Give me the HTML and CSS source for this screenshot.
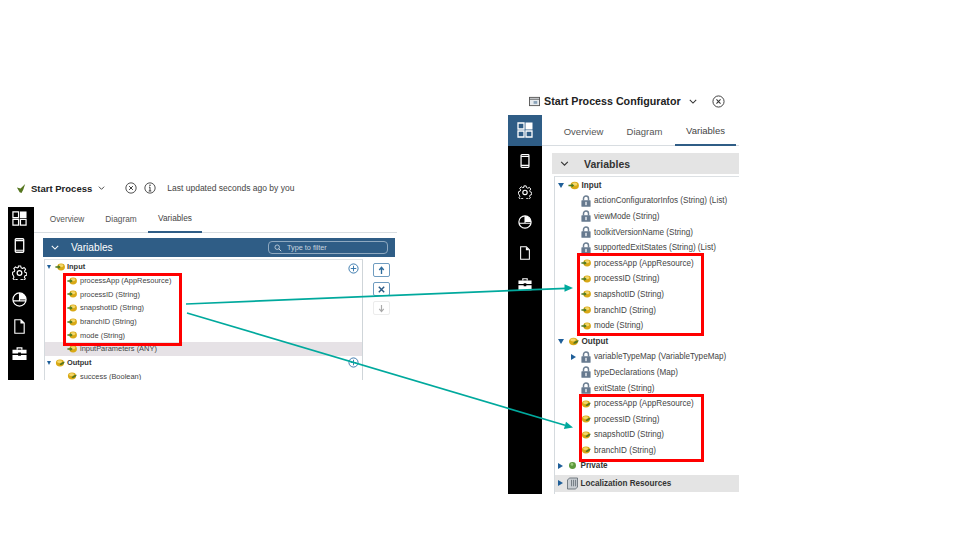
FILE: index.html
```html
<!DOCTYPE html>
<html lang="en">
<head>
  <meta charset="UTF-8">
  <title>Start Process variables</title>
  <link rel="stylesheet" href="styles.css">
</head>
<body>
  <svg class="defs" width="0" height="0">
    <defs>
      <symbol id="i-in" viewBox="0 0 12 9">
        <ellipse cx="7.300" cy="4.500" rx="4.600" ry="4.100" fill="#d9a916"/>
        <ellipse cx="7.300" cy="3" rx="2.800" ry="1.700" fill="#f3d76a"/>
        <path d="M0.500 3.700h3.500V2.200l2.800 2.300-2.800 2.300V5.300H0.500z" fill="#4c7a22"/>
      </symbol>
      <symbol id="i-out" viewBox="-2 0 12 9">
        <ellipse cx="4" cy="4.500" rx="4.900" ry="4.100" fill="#d9a916"/>
        <ellipse cx="3.500" cy="2.900" rx="3" ry="1.600" fill="#f3d76a"/>
        <path d="M3.500 6.800c1-2.200 3-3.500 6.300-3.700-1 2.800-3.300 4.300-6.300 3.700z" fill="#55761f"/>
      </symbol>
      <symbol id="i-lock" viewBox="0 0 12 14">
        <path d="M3 6.500V4a3 3 0 0 1 6 0v2.500" fill="none" stroke="#6d7f92" stroke-width="1.800"/>
        <rect x="0.500" y="6" width="11" height="8" rx="0.800" fill="#66798e"/>
        <rect x="5" y="8" width="2" height="4" fill="#d5dce4"/>
      </symbol>
      <symbol id="i-grid" viewBox="0 0 16 16">
        <path d="M1 1h6v6H1zM1 9h6v6H1zM9 9h6v6H9z" fill="none" stroke="#fff" stroke-width="1.300"/>
        <rect x="8.500" y="0.500" width="7" height="7" fill="#fff"/>
      </symbol>
      <symbol id="i-phone" viewBox="0 0 16 16">
        <rect x="3.500" y="0.800" width="9" height="14.400" rx="1" fill="none" stroke="#fff" stroke-width="1.400"/>
        <path d="M3.500 2.800h9M3.500 13h9" stroke="#fff" stroke-width="1.200"/>
      </symbol>
      <symbol id="i-gear" viewBox="0 0 16 16">
        <path d="M6.700 1h2.600l.4 2 1.500.7 1.800-1 1.600 1.900-1.200 1.700.4 1.500 1.900.7v2.400l-1.900.6-.6 1.500 1 1.700-1.800 1.700-1.700-1-1.500.6-.5 1.900H6.500l-.4-1.900-1.500-.6-1.700 1-1.800-1.800 1-1.600-.6-1.500L.6 10V7.700l1.900-.7.500-1.500-1.100-1.700 1.800-1.800 1.700 1.100 1.500-.6z" fill="none" stroke="#fff" stroke-width="1.100" stroke-linejoin="round"/>
        <circle cx="8" cy="8.500" r="2.500" fill="none" stroke="#fff" stroke-width="1.300"/>
      </symbol>
      <symbol id="i-pie" viewBox="0 0 16 16">
        <circle cx="8" cy="8" r="7" fill="none" stroke="#fff" stroke-width="1.300"/>
        <path d="M8 8V1a7 7 0 0 1 7 7z" fill="#fff"/>
        <path d="M1 9.500h14M8 1v8.500" stroke="#fff" stroke-width="1.200"/>
      </symbol>
      <symbol id="i-doc" viewBox="0 0 16 16">
        <path d="M3 .8h6.500L13 4.300v10.900H3z" fill="none" stroke="#fff" stroke-width="1.200"/>
        <path d="M9 .8v4h4z" fill="#fff"/>
      </symbol>
      <symbol id="i-box" viewBox="0 0 16 16">
        <path d="M5.500 4V2h5v2" fill="none" stroke="#fff" stroke-width="1.300"/>
        <path d="M0.500 4h15v4h-6V7h-3v1h-6zM0.500 9.500h6v1h3v-1h6V15h-15z" fill="#fff"/>
      </symbol>
      <symbol id="i-close" viewBox="0 0 14 14">
        <circle cx="7" cy="7" r="6" fill="none" stroke="#333" stroke-width="1"/>
        <path d="M4.800 4.800l4.400 4.400M9.200 4.800l-4.400 4.400" stroke="#333" stroke-width="1.100"/>
      </symbol>
      <symbol id="i-chev" viewBox="0 0 10 6">
        <path d="M1 1l4 4 4-4" fill="none" stroke="currentColor" stroke-width="1.300"/>
      </symbol>
    </defs>
  </svg>

  <!-- left panel -->
  <section class="panel panel-small">
    <header class="title">
      <svg class="title-logo" viewBox="0 0 12 12"><path d="M1 5l4 1 5-5-2 6-2 4-2-1z" fill="#55761f"/></svg>
      <b>Start Process</b>
      <svg class="chev"><use href="#i-chev"/></svg>
      <svg class="close"><use href="#i-close"/></svg>
      <svg class="close" viewBox="0 0 14 14">
        <circle cx="7" cy="7" r="6" fill="none" stroke="#333"/>
        <path d="M7 6v4.500M5.500 10.500h3M5.800 6H7" stroke="#333" stroke-width="1.100"/>
        <circle cx="7" cy="3.900" r="0.900" fill="#333"/>
      </svg>
      <span class="updated">Last updated seconds ago by you</span>
    </header>
    <div class="body">
      <nav class="rail">
        <span class="rail-item"><svg><use href="#i-grid"/></svg></span>
        <span class="rail-item"><svg><use href="#i-phone"/></svg></span>
        <span class="rail-item"><svg><use href="#i-gear"/></svg></span>
        <span class="rail-item"><svg><use href="#i-pie"/></svg></span>
        <span class="rail-item"><svg><use href="#i-doc"/></svg></span>
        <span class="rail-item"><svg><use href="#i-box"/></svg></span>
      </nav>
      <div class="main">
        <div class="tabs">
          <span class="tab">Overview</span>
          <span class="tab">Diagram</span>
          <span class="tab active">Variables</span>
        </div>
        <div class="bar">
          <svg class="chev"><use href="#i-chev"/></svg>
          <span class="bar-title">Variables</span>
          <span class="filter">
            <svg viewBox="0 0 10 10"><circle cx="4" cy="4" r="2.800" fill="none" stroke="#cfd9e3"/><path d="M6 6l3 3" stroke="#cfd9e3" stroke-width="1.200"/></svg>
            Type to filter
          </span>
        </div>
        <div class="split">
          <div class="tree">
            <div class="row head"><i class="tw down"></i><svg class="ic"><use href="#i-in"/></svg>Input<svg class="plus" viewBox="0 0 12 12"><circle cx="6" cy="6" r="5" fill="none" stroke="#2f72a8"/><path d="M3 6h6M6 3v6" stroke="#2f72a8"/></svg></div>
            <div class="row"><svg class="ic"><use href="#i-in"/></svg>processApp (AppResource)</div>
            <div class="row"><svg class="ic"><use href="#i-in"/></svg>processID (String)</div>
            <div class="row"><svg class="ic"><use href="#i-in"/></svg>snapshotID (String)</div>
            <div class="row"><svg class="ic"><use href="#i-in"/></svg>branchID (String)</div>
            <div class="row"><svg class="ic"><use href="#i-in"/></svg>mode (String)</div>
            <div class="row selected"><svg class="ic"><use href="#i-in"/></svg>inputParameters (ANY)</div>
            <div class="row head"><i class="tw down"></i><svg class="ic"><use href="#i-out"/></svg>Output<svg class="plus" viewBox="0 0 12 12"><circle cx="6" cy="6" r="5" fill="none" stroke="#2f72a8"/><path d="M3 6h6M6 3v6" stroke="#2f72a8"/></svg></div>
            <div class="row"><svg class="ic"><use href="#i-out"/></svg>success (Boolean)</div>
          </div>
          <div class="tools">
            <span class="tool"><svg viewBox="0 0 10 10"><path d="M5 9V2M2.500 4.500L5 1.500l2.500 3" fill="none" stroke="#2f6c9c" stroke-width="1.500"/></svg></span>
            <span class="tool"><svg viewBox="0 0 10 10"><path d="M2 2l6 6M8 2l-6 6" stroke="#2c5a85" stroke-width="1.600"/></svg></span>
            <span class="tool off"><svg viewBox="0 0 10 10"><path d="M5 1v7M2.500 5.500L5 8.500l2.500-3" fill="none" stroke="#aaa" stroke-width="1.300"/></svg></span>
          </div>
        </div>
      </div>
    </div>
  </section>

  <!-- right panel -->
  <section class="panel panel-big">
    <header class="title">
      <svg class="title-logo" viewBox="0 0 12 12"><rect x="0.500" y="1.500" width="11" height="9" fill="#e6eaee" stroke="#555"/><path d="M0.500 3.500h11" stroke="#555"/><rect x="5" y="5.500" width="4" height="3" fill="#8aa2b8"/></svg>
      <b>Start Process Configurator</b>
      <svg class="chev"><use href="#i-chev"/></svg>
      <svg class="close"><use href="#i-close"/></svg>
    </header>
    <div class="body">
      <nav class="rail">
        <span class="rail-item current"><svg><use href="#i-grid"/></svg></span>
        <span class="rail-item"><svg><use href="#i-phone"/></svg></span>
        <span class="rail-item"><svg><use href="#i-gear"/></svg></span>
        <span class="rail-item"><svg><use href="#i-pie"/></svg></span>
        <span class="rail-item"><svg><use href="#i-doc"/></svg></span>
        <span class="rail-item"><svg><use href="#i-box"/></svg></span>
      </nav>
      <div class="main">
        <div class="tabs">
          <span class="tab">Overview</span>
          <span class="tab">Diagram</span>
          <span class="tab active">Variables</span>
        </div>
        <div class="bar">
          <svg class="chev"><use href="#i-chev"/></svg>
          <span class="bar-title">Variables</span>
        </div>
        <div class="tree">
          <div class="row head"><i class="tw down"></i><svg class="ic"><use href="#i-in"/></svg>Input</div>
          <div class="row"><svg class="ic lock"><use href="#i-lock"/></svg>actionConfiguratorInfos (String) (List)</div>
          <div class="row"><svg class="ic lock"><use href="#i-lock"/></svg>viewMode (String)</div>
          <div class="row"><svg class="ic lock"><use href="#i-lock"/></svg>toolkitVersionName (String)</div>
          <div class="row"><svg class="ic lock"><use href="#i-lock"/></svg>supportedExitStates (String) (List)</div>
          <div class="row"><svg class="ic"><use href="#i-in"/></svg>processApp (AppResource)</div>
          <div class="row"><svg class="ic"><use href="#i-in"/></svg>processID (String)</div>
          <div class="row"><svg class="ic"><use href="#i-in"/></svg>snapshotID (String)</div>
          <div class="row"><svg class="ic"><use href="#i-in"/></svg>branchID (String)</div>
          <div class="row"><svg class="ic"><use href="#i-in"/></svg>mode (String)</div>
          <div class="row head"><i class="tw down"></i><svg class="ic"><use href="#i-out"/></svg>Output</div>
          <div class="row"><i class="tw right inset"></i><svg class="ic lock"><use href="#i-lock"/></svg>variableTypeMap (VariableTypeMap)</div>
          <div class="row"><svg class="ic lock"><use href="#i-lock"/></svg>typeDeclarations (Map)</div>
          <div class="row"><svg class="ic lock"><use href="#i-lock"/></svg>exitState (String)</div>
          <div class="row"><svg class="ic"><use href="#i-out"/></svg>processApp (AppResource)</div>
          <div class="row"><svg class="ic"><use href="#i-out"/></svg>processID (String)</div>
          <div class="row"><svg class="ic"><use href="#i-out"/></svg>snapshotID (String)</div>
          <div class="row"><svg class="ic"><use href="#i-out"/></svg>branchID (String)</div>
          <div class="row head"><i class="tw right"></i><svg class="ic" viewBox="0 0 12 9"><circle cx="6" cy="4.500" r="3.800" fill="#5c9a3c"/><circle cx="5.400" cy="3.400" r="1.500" fill="#9ccb7c"/></svg>Private</div>
          <div class="row head res"><i class="tw right"></i><svg class="ic" viewBox="0 0 12 14"><path d="M3 1h8.500v10L9 13H.5V3z" fill="#c9ced3" stroke="#5c666f" stroke-width="0.900"/><path d="M5 3v7M7.200 3v7M9.400 3v7" stroke="#5c666f" stroke-width="0.900"/></svg>Localization Resources</div>
        </div>
      </div>
    </div>
  </section>

  <!-- callouts that sit over both panels -->
  <div class="callout c1"></div>
  <div class="callout c2"></div>
  <div class="callout c3"></div>
  <svg class="arrows" width="960" height="540" viewBox="0 0 960 540">
    <path d="M186 304L566 288.300" stroke="#00a99d" stroke-width="1.700"/>
    <path d="M573 288l-8.500-3.800v7.600z" fill="#00a99d"/>
    <path d="M187 313L565 425.200" stroke="#00a99d" stroke-width="1.700"/>
    <path d="M573 427.500l-7-5.800-2.100 7.200z" fill="#00a99d"/>
  </svg>
</body>
</html>
```
FILE: styles.css
```css
html, body {
  margin: 0;
  padding: 0;
}

body {
  width: 960px;
  height: 540px;
  position: relative;
  overflow: hidden;
  background: #fff;
  font-family: "Liberation Sans", Arial, sans-serif;
  color: #444;
}

.defs {
  position: absolute;
}

svg {
  flex: none;
  display: block;
}

/* panels sit on a free canvas, like pictures on a slide */
.panel {
  position: absolute;
  display: flex;
  flex-direction: column;
}

.panel-small {
  left: 8px;
  top: 180px;
  width: 389px;
  height: 200px;
  font-size: 7.450px;
}

.panel-big {
  left: 508px;
  top: 92px;
  width: 231px;
  height: 402px;
  font-size: 8.150px;
}

.title {
  display: flex;
  align-items: center;
  color: #222;
}

.title b {
  font-weight: bold;
}

.panel-small .title {
  height: 16px;
  margin-bottom: 11px;
  padding-left: 8px;
  font-size: 9.500px;
}

.panel-big .title {
  height: 18px;
  margin-bottom: 5px;
  padding-left: 21px;
  font-size: 10.700px;
}

.title-logo {
  width: 11px;
  height: 11px;
  margin-right: 4px;
}

.title .chev {
  width: 7px;
  height: 4px;
  margin-left: 6px;
  color: #333;
}

.panel-big .title .chev {
  width: 8px;
  height: 5px;
  margin-left: 8px;
}

.close {
  width: 12px;
  height: 12px;
}

.panel-small .close {
  margin-left: 7px;
}

.panel-small .title .chev + .close {
  margin-left: 20px;
}

.panel-big .title .close {
  margin-left: 15px;
  width: 13px;
  height: 13px;
}

.updated {
  margin-left: 11px;
  font-size: 8.500px;
  color: #444;
}

.body {
  flex: 1;
  display: flex;
  min-height: 0;
}

.rail {
  background: #000;
  display: flex;
  flex-direction: column;
  flex: none;
}

.panel-small .rail {
  width: 26px;
  padding-top: 4px;
  box-sizing: border-box;
}

.panel-big .rail {
  width: 34px;
}

.rail-item {
  display: flex;
  align-items: center;
  justify-content: center;
}

.panel-small .rail-item {
  height: 27px;
  align-items: flex-start;
  padding-right: 4px;
}

.panel-small .rail-item svg {
  width: 15px;
  height: 15px;
}

.panel-big .rail-item {
  height: 30.700px;
}

.panel-big .rail-item svg {
  width: 14px;
  height: 14px;
}

.panel-big .rail-item.current svg {
  width: 16px;
  height: 16px;
}

.rail-item.current {
  background: #2f5d86;
}

.main {
  flex: 1;
  min-width: 0;
  display: flex;
  flex-direction: column;
}

.tabs {
  display: flex;
  border-bottom: 1px solid #d8dde1;
  flex: none;
}

.panel-small .tabs {
  height: 25px;
  padding-left: 6px;
}

.panel-big .tabs {
  height: 30px;
  padding-left: 11px;
}

.tab {
  display: flex;
  align-items: center;
  justify-content: center;
  color: #555;
  box-sizing: border-box;
}

.panel-small .tab {
  width: 54px;
  height: 26px;
  padding-bottom: 2px;
  font-size: 8.300px;
}

.panel-big .tab {
  width: 61px;
  height: 31px;
  padding-top: 2px;
  font-size: 9.500px;
}

.tab.active {
  border-bottom: 2px solid #2f5d86;
  color: #444;
}

.bar {
  display: flex;
  align-items: center;
  flex: none;
}

.panel-small .bar {
  height: 19px;
  margin: 5px 2px 2px 9px;
  background: #2f5d86;
  color: #fff;
  font-size: 10.200px;
}

.panel-big .bar {
  height: 21px;
  margin: 7px 0 2px 10px;
  background: #e4e4e4;
  color: #333;
  font-size: 10.500px;
  font-weight: bold;
}

.bar .chev {
  width: 8px;
  height: 5px;
  margin-left: 8px;
}

.panel-big .bar .chev {
  width: 9px;
}

.bar-title {
  margin-left: 15px;
}

.panel-small .bar-title {
  margin-left: 12px;
}

.filter {
  margin-left: auto;
  margin-right: 7px;
  width: 120px;
  height: 13px;
  box-sizing: border-box;
  border: 1px solid #8fa9c0;
  border-radius: 4px;
  display: flex;
  align-items: center;
  gap: 5px;
  padding-left: 5px;
  font-size: 7.300px;
  color: #c8d4df;
}

.filter svg {
  width: 8px;
  height: 8px;
}

.split {
  flex: 1;
  display: flex;
  min-height: 0;
}

.tree {
  box-sizing: border-box;
  border-left: 1px solid #d5dade;
  overflow: hidden;
}

.panel-small .tree {
  width: 319px;
  margin-left: 10px;
  border-right: 1px solid #cfd5d9;
  border-top: 1px solid #dde1e4;
}

.panel-big .tree {
  margin-left: 12px;
  flex: 1;
  border-top: 1px solid #dde1e4;
  padding-top: 0.500px;
}

.row {
  display: flex;
  align-items: center;
  position: relative;
  white-space: nowrap;
}

.panel-small .row {
  height: 13.700px;
  padding-left: 22px;
}

.panel-big .row {
  height: 15.600px;
  padding-left: 26px;
}

.panel-small .head,
.panel-big .head {
  padding-left: 3px;
  font-weight: bold;
  color: #333;
}

.panel-small .head {
  padding-left: 2px;
}

.row.selected {
  background: #e6e2e6;
}

.row.res {
  background: #e4e4e4;
  height: 17px;
  margin-top: 1px;
}

.ic {
  width: 10px;
  height: 8px;
  margin-right: 3px;
}

.panel-big .ic.lock {
  width: 10px;
  height: 12px;
}

.panel-big .head .ic {
  margin-left: 4px;
  margin-right: 2.500px;
  width: 11px;
  height: 9px;
}

.panel-big .res .ic {
  width: 11px;
  height: 13px;
}

.panel-small .head .ic {
  margin-left: 4px;
  margin-right: 2px;
}

.tw {
  width: 0;
  height: 0;
  flex: none;
  display: block;
}

.tw.down {
  border-left: 3px solid transparent;
  border-right: 3px solid transparent;
  border-top: 5px solid #1f5f99;
}

.panel-small .tw.down {
  border-left-width: 2.500px;
  border-right-width: 2.500px;
  border-top-width: 4px;
}

.tw.right {
  border-top: 3px solid transparent;
  border-bottom: 3px solid transparent;
  border-left: 5px solid #1f5f99;
}

.tw.inset {
  position: absolute;
  left: 16px;
}

.plus {
  position: absolute;
  right: 3px;
  top: 1px;
  width: 11px;
  height: 11px;
}

.tree .row:first-child .plus {
  top: 3px;
}

.tools {
  display: flex;
  flex-direction: column;
  gap: 5px;
  margin-left: 10px;
  padding-top: 4px;
}

.tool {
  width: 17px;
  height: 14px;
  box-sizing: border-box;
  border: 1px solid #6f9cc0;
  border-radius: 2px;
  display: flex;
  align-items: center;
  justify-content: center;
}

.tool svg {
  width: 9px;
  height: 9px;
}

.tool.off {
  border-color: #ececec;
}

/* red highlight boxes and arrows drawn over the screenshots */
.callout {
  position: absolute;
  box-sizing: border-box;
  border: 3px solid #ff0000;
}

.c1 {
  left: 63px;
  top: 273px;
  width: 119px;
  height: 73px;
}

.c2 {
  left: 577px;
  top: 253px;
  width: 127px;
  height: 83px;
}

.c3 {
  left: 579px;
  top: 394px;
  width: 125px;
  height: 68px;
}

.arrows {
  position: absolute;
  left: 0;
  top: 0;
}
```
